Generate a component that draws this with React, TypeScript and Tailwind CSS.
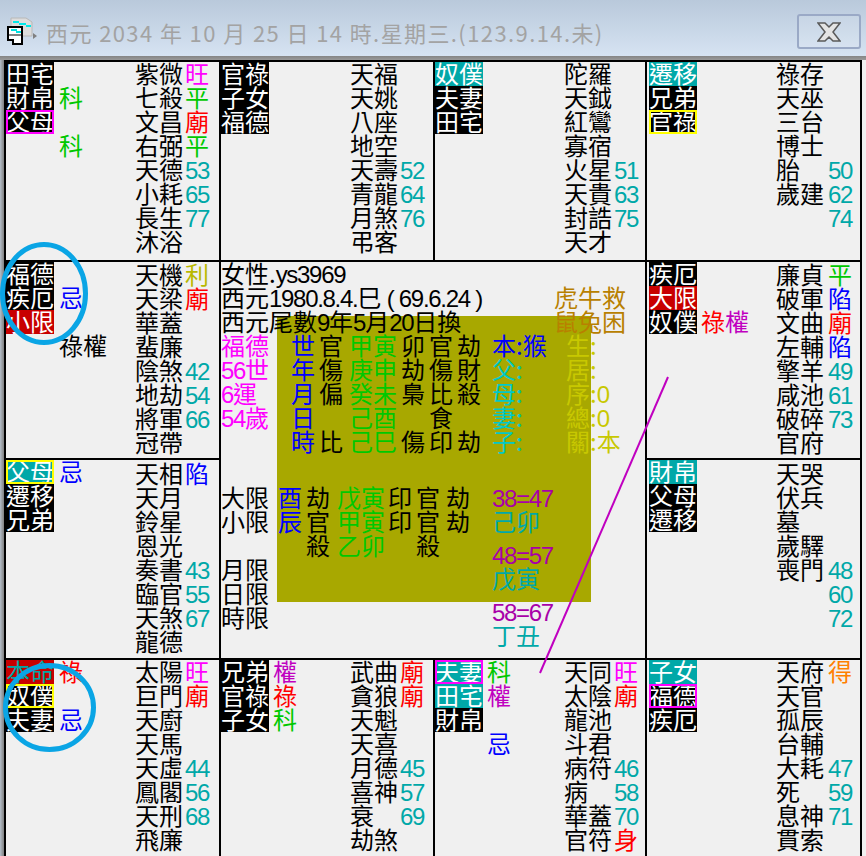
import type { ReactNode } from 'react';

type Label = { text: string; bg?: string; fg?: string; ring?: string };
type Note = { row: number; items: { text: string; color: string }[] };
type Star = { name?: string; value?: string; valueColor?: string };

const BLACK = 'bg-black';
const TEAL = 'bg-[#00a8a8]';
const RED = 'bg-[#c80000]';
const MAGENTA_RING = 'outline-2 -outline-offset-2 outline-[#ff00ff]';
const YELLOW_RING = 'outline-2 -outline-offset-2 outline-[#ffff00]';

const C_TEAL = 'text-[#00a8a8]';
const C_RED = 'text-[#ff0000]';
const C_GREEN = 'text-[#00c800]';
const C_BLUE = 'text-[#0000ff]';
const C_MAGENTA = 'text-[#ff00ff]';
const C_PURPLE = 'text-[#c000c0]';
const C_OLIVE = 'text-[#b8b800]';
const C_ORANGE = 'text-[#ff8000]';

// half width digits: the original font has 12px wide, tall numerals
function Num({ children }: { children: ReactNode }) {
  return <span className="font-['Liberation_Sans',sans-serif] text-[24px] tracking-[-1.3px]">{children}</span>;
}

function star(name?: string, value?: string, valueColor?: string): Star {
  return { name, value, valueColor };
}

function Cell({
  labels,
  notes = [],
  stars,
  starTop = '',
  first,
  last,
}: {
  labels: Label[];
  notes?: Note[];
  stars: Star[];
  starTop?: string;
  first?: boolean;
  last?: boolean;
}) {
  return (
    <div className={`flex bg-[#f0f0f0] ${last ? 'pl-[2px]' : ''}`}>
      <div className="w-12 shrink-0">
        {labels.map((l, i) => (
          <div key={i} className={`h-6 w-12 leading-[22px] ${l.bg ?? BLACK} ${l.fg ?? 'text-white'} ${l.ring ?? ''}`}>
            {l.text}
          </div>
        ))}
      </div>
      <div className={`${last ? 'w-[79px]' : 'w-[81px]'} shrink-0 ${first ? 'pl-[5px]' : 'pl-[4px]'}`}>
        {Array.from({ length: 5 }).map((_, i) => {
          const note = notes.find((n) => n.row === i);
          return (
            <div key={i} className="h-6 leading-[22px] whitespace-nowrap">
              {note?.items.map((it, k) => (
                <span key={k} className={it.color}>
                  {it.text}
                </span>
              ))}
            </div>
          );
        })}
      </div>
      <div className={`${starTop} flex-1`}>
        {stars.map((s, i) => (
          <div key={i} className="flex h-6 leading-[22px]">
            <div className={`${last ? 'w-[52px]' : 'w-[50px]'} shrink-0`}>{s.name}</div>
            <div className={s.valueColor ?? C_TEAL}>
              {s.value && /\d/.test(s.value) ? <Num>{s.value}</Num> : s.value}
            </div>
          </div>
        ))}
      </div>
    </div>
  );
}

function PillarRow({ cols, grid, first }: { cols: string[]; grid: string; first: string }) {
  return (
    <div className={`grid h-6 leading-[22px] ${grid}`}>
      <div className={first}>{cols[0]}</div>
      <div>{cols[1]}</div>
      <div className={C_GREEN}>{cols[2]}</div>
      <div className={C_GREEN}>{cols[3]}</div>
      <div>{cols[4]}</div>
      <div>{cols[5]}</div>
      <div>{cols[6]}</div>
    </div>
  );
}

const upperPillars = [
  ['世', '官', '甲', '寅', '卯', '官', '劫'],
  ['年', '傷', '庚', '申', '劫', '傷', '財'],
  ['月', '偏', '癸', '未', '梟', '比', '殺'],
  ['日', '', '己', '酉', '', '食', ''],
  ['時', '比', '己', '巳', '傷', '印', '劫'],
];

const lowerPillars = [
  ['酉', '劫', '戊', '寅', '印', '官', '劫'],
  ['辰', '官', '甲', '寅', '印', '官', '劫'],
  ['', '殺', '乙', '卯', '', '殺', ''],
];

function Center() {
  return (
    <div className="relative col-span-2 row-span-2 bg-[#f0f0f0]">
      <div className="absolute left-[56px] top-[54px] h-[286px] w-[314px] bg-[#a8a800]" />
      <div className="relative">
        <div className="flex h-[72px] leading-[22px]">
          <div className="w-[333px]">
            <div className="h-6 whitespace-nowrap">
              女性.<Num>ys3969</Num>
            </div>
            <div className="h-6 whitespace-nowrap">
              西元<Num>1980.8.4.</Num>巳<Num> ( 69.6.24 )</Num>
            </div>
            <div className="h-6 whitespace-nowrap">
              西元尾數<Num>9</Num>年<Num>5</Num>月<Num>20</Num>日換
            </div>
          </div>
          <div className="pt-6 text-[#b88000]">
            <div className="h-6">虎牛救</div>
            <div className="h-6">鼠兔困</div>
          </div>
        </div>

        <div className="flex">
          <div className={`w-[70px] shrink-0 leading-[22px] ${C_MAGENTA}`}>
            <div className="h-6">福德</div>
            <div className="h-6"><Num>56</Num>世</div>
            <div className="h-6"><Num>6</Num>運</div>
            <div className="h-6"><Num>54</Num>歲</div>
          </div>
          <div className="w-[190px] shrink-0">
            {upperPillars.map((p, i) => (
              <PillarRow key={i} cols={p} first={C_BLUE} grid="grid-cols-[28px_30px_24px_28px_28px_28px_24px]" />
            ))}
          </div>
          <div className="ml-[11px] w-[74px] shrink-0 leading-[22px]">
            <div className={`h-6 ${C_BLUE}`}>本:猴</div>
            <div className="h-6 text-[#00c8c8]">父:</div>
            <div className="h-6 text-[#00c8c8]">母:</div>
            <div className="h-6 text-[#00c8c8]">妻:</div>
            <div className="h-6 text-[#00c8c8]">子:</div>
          </div>
          <div className="leading-[22px] text-[#c8c800]">
            <div className="h-6">生:</div>
            <div className="h-6">居:</div>
            <div className="h-6">序:<Num>0</Num></div>
            <div className="h-6">總:<Num>0</Num></div>
            <div className="h-6">關:本</div>
          </div>
        </div>

        <div className="mt-8 flex">
          <div className="w-[57px] shrink-0 leading-[22px]">
            <div className="h-6">大限</div>
            <div className="h-6">小限</div>
            <div className="h-6" />
            <div className="h-6">月限</div>
            <div className="h-6">日限</div>
            <div className="h-6">時限</div>
          </div>
          <div className="w-[192px] shrink-0">
            {lowerPillars.map((p, i) => (
              <PillarRow key={i} cols={p} first={C_BLUE} grid="grid-cols-[28px_31px_24px_27px_28px_30px_24px]" />
            ))}
          </div>
          <div className="ml-[22px] flex flex-col gap-[9px] leading-[22px]">
            {[
              ['38=47', '己卯'],
              ['48=57', '戊寅'],
              ['58=67', '丁丑'],
            ].map(([range, stem]) => (
              <div key={range}>
                <div className="h-6 text-[#a800a8]"><Num>{range}</Num></div>
                <div className={`h-6 ${C_TEAL}`}>{stem}</div>
              </div>
            ))}
          </div>
        </div>
      </div>
    </div>
  );
}

export default function App() {
  return (
    <div className="relative h-[856px] w-[866px] overflow-hidden bg-[#f0f0f0] font-['Noto_Sans_CJK_TC','Noto_Sans',sans-serif] text-[24px] text-black">
      {/* title bar */}
      <div className="flex h-14 items-center bg-gradient-to-b from-[#b9c9db] to-[#d6e3f2]">
        <svg width="32" height="28" viewBox="0 0 32 28" className="ml-[6px] mt-[6px] shrink-0">
          <path d="M5 1h15l6 4v14H5z" fill="#dcdcdc" stroke="#b8b8b8" />
          <path d="M7 5h6M13 7h7M20 9h5" stroke="#00e8e8" strokeWidth="2" />
          <path d="M27 16l4 3-4 3z" fill="#808080" />
          <path d="M2 10h14v17H7v-4H2z" fill="#fff" stroke="#000" strokeWidth="2" />
          <path d="M5 13h6M10 15h5" stroke="#00e0e0" strokeWidth="2" />
          <path d="M2 18h14" stroke="#000" strokeWidth="1" />
        </svg>
        <div className="ml-2 mt-2 flex-1 whitespace-nowrap text-[22px] leading-7 tracking-[1.4px] text-[#a3a3a3]">
          西元 2034 年 10 月 25 日 14 時.星期三.(123.9.14.未)
        </div>
        <div className="mr-[5px] mt-[7px] flex h-[35px] w-[64px] items-center justify-center rounded-[3px] border-2 border-[#9aa9c6] bg-white/10">
          <svg width="24" height="20" viewBox="0 0 24 20">
            <path d="M1 1h7l4 4 4-4h7l-7 9 7 9h-7l-4-4-4 4H1l7-9z" fill="#e4e4e4" stroke="#5a5a5a" strokeWidth="1.5" />
          </svg>
        </div>
      </div>

      {/* chart */}
      <div className="h-1 bg-gradient-to-b from-[#858585] to-[#9a9a9a]" />
      <div className="flex h-[796px]">
        <div className="w-1 bg-gradient-to-r from-[#b5bfca] to-[#808080]" />
        <div className="grid w-[858px] grid-cols-[213px_212px_210px_213px] grid-rows-[198px_196px_198px_196px] gap-[2px] border-x-[2px] border-t-[2px] border-black bg-black">
          <Cell
            first
            labels={[{ text: '田宅' }, { text: '財帛' }, { text: '父母', ring: MAGENTA_RING }]}
            notes={[
              { row: 1, items: [{ text: '科', color: C_GREEN }] },
              { row: 3, items: [{ text: '科', color: C_GREEN }] },
            ]}
            stars={[
              star('紫微', '旺', C_MAGENTA),
              star('七殺', '平', C_GREEN),
              star('文昌', '廟', C_RED),
              star('右弼', '平', C_GREEN),
              star('天德', '53'),
              star('小耗', '65'),
              star('長生', '77'),
              star('沐浴'),
            ]}
          />
          <Cell
            labels={[{ text: '官祿' }, { text: '子女' }, { text: '福德' }]}
            stars={[
              star('天福'),
              star('天姚'),
              star('八座'),
              star('地空'),
              star('天壽', '52'),
              star('青龍', '64'),
              star('月煞', '76'),
              star('弔客'),
            ]}
          />
          <Cell
            labels={[{ text: '奴僕', bg: TEAL }, { text: '夫妻' }, { text: '田宅' }]}
            stars={[
              star('陀羅'),
              star('天鉞'),
              star('紅鸞'),
              star('寡宿'),
              star('火星', '51'),
              star('天貴', '63'),
              star('封誥', '75'),
              star('天才'),
            ]}
          />
          <Cell
            last
            labels={[{ text: '遷移', bg: TEAL }, { text: '兄弟' }, { text: '官祿', ring: YELLOW_RING }]}
            stars={[
              star('祿存'),
              star('天巫'),
              star('三台'),
              star('博士'),
              star('胎', '50'),
              star('歲建', '62'),
              star('', '74'),
            ]}
          />

          <Cell
            first
            starTop="pt-px"
            labels={[{ text: '福德' }, { text: '疾厄' }, { text: '小限', bg: RED }]}
            notes={[
              { row: 1, items: [{ text: '忌', color: C_BLUE }] },
              { row: 3, items: [{ text: '祿權', color: 'text-black' }] },
            ]}
            stars={[
              star('天機', '利', C_OLIVE),
              star('天梁', '廟', C_RED),
              star('華蓋'),
              star('蜚廉'),
              star('陰煞', '42'),
              star('地劫', '54'),
              star('將軍', '66'),
              star('冠帶'),
            ]}
          />
          <Center />
          <Cell
            last
            starTop="pt-px"
            labels={[{ text: '疾厄' }, { text: '大限', bg: RED }, { text: '奴僕' }]}
            notes={[
              {
                row: 2,
                items: [
                  { text: '祿', color: C_RED },
                  { text: '權', color: C_PURPLE },
                ],
              },
            ]}
            stars={[
              star('廉貞', '平', C_GREEN),
              star('破軍', '陷', C_BLUE),
              star('文曲', '廟', C_RED),
              star('左輔', '陷', C_BLUE),
              star('擎羊', '49'),
              star('咸池', '61'),
              star('破碎', '73'),
              star('官府'),
            ]}
          />

          <Cell
            first
            starTop="pt-[2px]"
            labels={[{ text: '父母', bg: TEAL, ring: YELLOW_RING }, { text: '遷移' }, { text: '兄弟' }]}
            notes={[{ row: 0, items: [{ text: '忌', color: C_BLUE }] }]}
            stars={[
              star('天相', '陷', C_BLUE),
              star('天月'),
              star('鈴星'),
              star('恩光'),
              star('奏書', '43'),
              star('臨官', '55'),
              star('天煞', '67'),
              star('龍德'),
            ]}
          />
          <Cell
            last
            starTop="pt-[2px]"
            labels={[{ text: '財帛', bg: TEAL }, { text: '父母' }, { text: '遷移' }]}
            stars={[
              star('天哭'),
              star('伏兵'),
              star('墓'),
              star('歲驛'),
              star('喪門', '48'),
              star('', '60'),
              star('', '72'),
            ]}
          />

          <Cell
            first
            labels={[{ text: '本命', bg: RED, fg: C_TEAL }, { text: '奴僕', ring: YELLOW_RING }, { text: '夫妻' }]}
            notes={[
              { row: 0, items: [{ text: '祿', color: C_RED }] },
              { row: 2, items: [{ text: '忌', color: C_BLUE }] },
            ]}
            stars={[
              star('太陽', '旺', C_MAGENTA),
              star('巨門', '廟', C_RED),
              star('天廚'),
              star('天馬'),
              star('天虛', '44'),
              star('鳳閣', '56'),
              star('天刑', '68'),
              star('飛廉'),
            ]}
          />
          <Cell
            labels={[{ text: '兄弟' }, { text: '官祿' }, { text: '子女' }]}
            notes={[
              { row: 0, items: [{ text: '權', color: C_PURPLE }] },
              { row: 1, items: [{ text: '祿', color: C_RED }] },
              { row: 2, items: [{ text: '科', color: C_GREEN }] },
            ]}
            stars={[
              star('武曲', '廟', C_RED),
              star('貪狼', '廟', C_RED),
              star('天魁'),
              star('天喜'),
              star('月德', '45'),
              star('喜神', '57'),
              star('衰', '69'),
              star('劫煞'),
            ]}
          />
          <Cell
            labels={[{ text: '夫妻', bg: TEAL, ring: MAGENTA_RING }, { text: '田宅', bg: TEAL }, { text: '財帛' }]}
            notes={[
              { row: 0, items: [{ text: '科', color: C_GREEN }] },
              { row: 1, items: [{ text: '權', color: C_PURPLE }] },
              { row: 3, items: [{ text: '忌', color: C_BLUE }] },
            ]}
            stars={[
              star('天同', '旺', C_MAGENTA),
              star('太陰', '廟', C_RED),
              star('龍池'),
              star('斗君'),
              star('病符', '46'),
              star('病', '58'),
              star('華蓋', '70'),
              star('官符', '身', C_RED),
            ]}
          />
          <Cell
            last
            labels={[{ text: '子女', bg: TEAL }, { text: '福德', ring: MAGENTA_RING }, { text: '疾厄' }]}
            stars={[
              star('天府', '得', C_ORANGE),
              star('天官'),
              star('孤辰'),
              star('台輔'),
              star('大耗', '47'),
              star('死', '59'),
              star('息神', '71'),
              star('貫索'),
            ]}
          />
        </div>
      </div>

      {/* hand drawn marks on top of the chart */}
      <svg className="pointer-events-none absolute inset-0" width="866" height="856" viewBox="0 0 866 856">
        <ellipse cx="44" cy="293.5" rx="41.5" ry="49" fill="none" stroke="#0aa5e5" strokeWidth="5" />
        <ellipse cx="49.5" cy="707.5" rx="44" ry="42" fill="none" stroke="#0aa5e5" strokeWidth="5" />
        <line x1="668" y1="377" x2="540" y2="673" stroke="#c000c0" strokeWidth="2" />
      </svg>
    </div>
  );
}
